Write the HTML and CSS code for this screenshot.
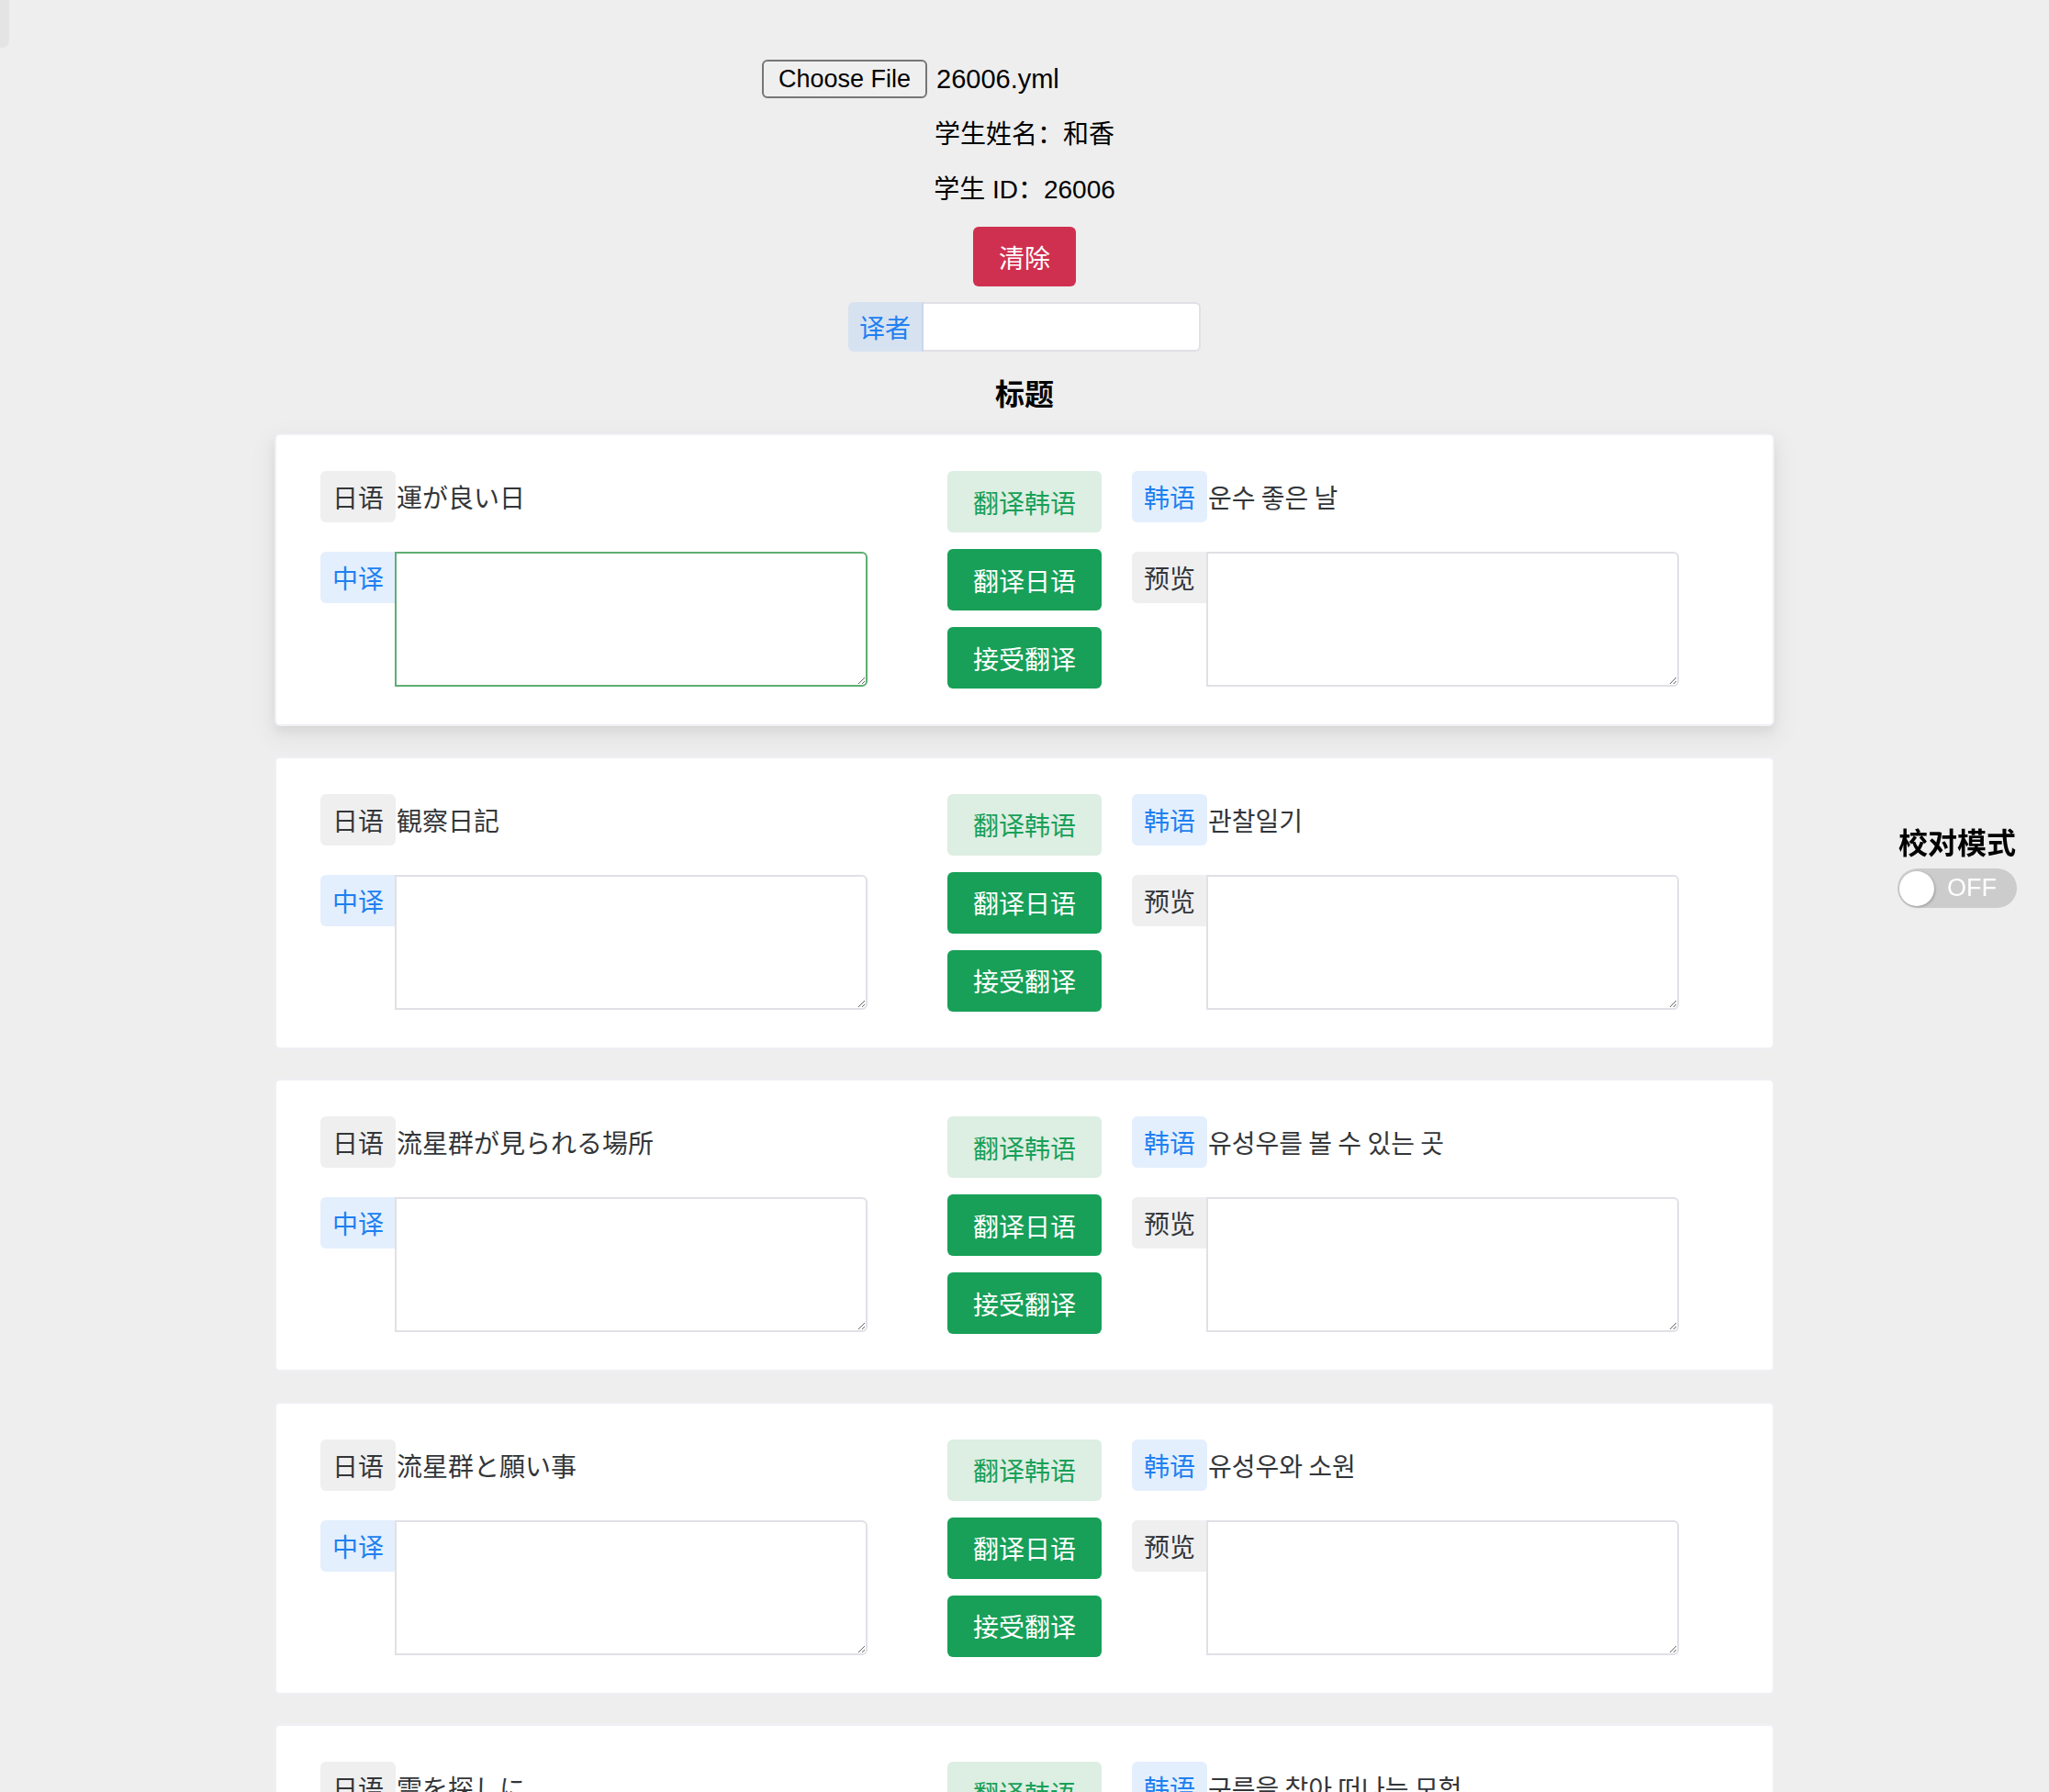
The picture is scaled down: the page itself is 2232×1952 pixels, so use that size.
FILE: index.html
```html
<!DOCTYPE html>
<html lang="zh">
<head>
<meta charset="utf-8">
<title>翻译校对</title>
<link rel="stylesheet" href="styles.css">
</head>
<body>
<div class="corner"></div>
<main class="page">
  <div class="file-row">
    <div class="file-input">
      <button class="file-btn">Choose File</button>
      <span class="file-name">26006.yml</span>
    </div>
  </div>
  <div class="info">学生姓名：和香</div>
  <div class="info">学生 ID：26006</div>
  <div class="clear-row"><button class="btn btn-error">清除</button></div>
  <div class="translator">
    <span class="tr-label">译者</span>
    <input class="tr-input" type="text">
  </div>
  <h2 class="title">标题</h2>

  <section class="cards">
    <article class="card card-hover">
      <div class="col">
        <div class="line"><span class="tag tag-gray">日语</span><span class="src ja">運が良い日</span></div>
        <div class="field"><span class="tag tag-blue attached">中译</span><textarea class="ta ta-focus"></textarea></div>
      </div>
      <div class="actions">
        <button class="btn btn-soft">翻译韩语</button>
        <button class="btn btn-primary">翻译日语</button>
        <button class="btn btn-primary">接受翻译</button>
      </div>
      <div class="col col-right">
        <div class="line"><span class="tag tag-blue">韩语</span><span class="src ko">운수 좋은 날</span></div>
        <div class="field"><span class="tag tag-gray attached">预览</span><textarea class="ta"></textarea></div>
      </div>
    </article>

    <article class="card">
      <div class="col">
        <div class="line"><span class="tag tag-gray">日语</span><span class="src ja">観察日記</span></div>
        <div class="field"><span class="tag tag-blue attached">中译</span><textarea class="ta"></textarea></div>
      </div>
      <div class="actions">
        <button class="btn btn-soft">翻译韩语</button>
        <button class="btn btn-primary">翻译日语</button>
        <button class="btn btn-primary">接受翻译</button>
      </div>
      <div class="col col-right">
        <div class="line"><span class="tag tag-blue">韩语</span><span class="src ko">관찰일기</span></div>
        <div class="field"><span class="tag tag-gray attached">预览</span><textarea class="ta"></textarea></div>
      </div>
    </article>

    <article class="card">
      <div class="col">
        <div class="line"><span class="tag tag-gray">日语</span><span class="src ja">流星群が見られる場所</span></div>
        <div class="field"><span class="tag tag-blue attached">中译</span><textarea class="ta"></textarea></div>
      </div>
      <div class="actions">
        <button class="btn btn-soft">翻译韩语</button>
        <button class="btn btn-primary">翻译日语</button>
        <button class="btn btn-primary">接受翻译</button>
      </div>
      <div class="col col-right">
        <div class="line"><span class="tag tag-blue">韩语</span><span class="src ko">유성우를 볼 수 있는 곳</span></div>
        <div class="field"><span class="tag tag-gray attached">预览</span><textarea class="ta"></textarea></div>
      </div>
    </article>

    <article class="card">
      <div class="col">
        <div class="line"><span class="tag tag-gray">日语</span><span class="src ja">流星群と願い事</span></div>
        <div class="field"><span class="tag tag-blue attached">中译</span><textarea class="ta"></textarea></div>
      </div>
      <div class="actions">
        <button class="btn btn-soft">翻译韩语</button>
        <button class="btn btn-primary">翻译日语</button>
        <button class="btn btn-primary">接受翻译</button>
      </div>
      <div class="col col-right">
        <div class="line"><span class="tag tag-blue">韩语</span><span class="src ko">유성우와 소원</span></div>
        <div class="field"><span class="tag tag-gray attached">预览</span><textarea class="ta"></textarea></div>
      </div>
    </article>

    <article class="card">
      <div class="col">
        <div class="line"><span class="tag tag-gray">日语</span><span class="src ja">雲を探しに</span></div>
        <div class="field"><span class="tag tag-blue attached">中译</span><textarea class="ta"></textarea></div>
      </div>
      <div class="actions">
        <button class="btn btn-soft">翻译韩语</button>
        <button class="btn btn-primary">翻译日语</button>
        <button class="btn btn-primary">接受翻译</button>
      </div>
      <div class="col col-right">
        <div class="line"><span class="tag tag-blue">韩语</span><span class="src ko">구름을 찾아 떠나는 모험</span></div>
        <div class="field"><span class="tag tag-gray attached">预览</span><textarea class="ta"></textarea></div>
      </div>
    </article>
  </section>
</main>

<aside class="proof-mode">
  <div class="proof-title">校对模式</div>
  <div class="switch">
    <span class="knob"></span>
    <span class="switch-text">OFF</span>
  </div>
</aside>
</body>
</html>
```

FILE: styles.css
```css
html, body {
  margin: 0;
  padding: 0;
}

body {
  background: #eeeeee;
  color: #000;
  font-family: "Liberation Sans", "Noto Sans CJK SC", sans-serif;
  font-size: 28px;
}

.corner {
  position: absolute;
  left: 0;
  top: 0;
  width: 10px;
  height: 52px;
  background: #e4e4e4;
  border-bottom-right-radius: 8px;
}

.page {
  padding-top: 65px;
  display: flex;
  flex-direction: column;
  align-items: center;
}

/* top controls */
.file-row {
  display: flex;
  justify-content: center;
}

.file-input {
  width: 572px;
  height: 42px;
  display: flex;
  align-items: center;
  gap: 10px;
}

.file-btn {
  height: 42px;
  width: 180px;
  box-sizing: border-box;
  border: 2px solid #767676;
  border-radius: 6px;
  background: #efefef;
  color: #000;
  font-family: "Liberation Sans", sans-serif;
  font-size: 27px;
  padding: 0;
}

.file-name {
  font-family: "Liberation Sans", sans-serif;
  font-size: 29px;
  line-height: 42px;
}

.info {
  margin-top: 20px;
  line-height: 40px;
  height: 40px;
  font-size: 28px;
  text-align: center;
}

.clear-row {
  margin-top: 20px;
}

.btn {
  border: none;
  border-radius: 6px;
  font-family: "Noto Sans CJK SC", sans-serif;
  font-size: 28px;
  padding: 0;
  cursor: pointer;
}

.btn-error {
  width: 112px;
  height: 65px;
  background: #d03050;
  color: #fff;
}

.translator {
  margin-top: 17px;
  width: 384px;
  height: 54px;
  display: flex;
}

.tr-label {
  width: 82px;
  box-sizing: border-box;
  background: #d7e2f1;
  color: #2080f0;
  font-family: "Noto Sans CJK SC", sans-serif;
  font-size: 28px;
  line-height: 54px;
  text-align: center;
  border-radius: 6px 0 0 6px;
  border-right: 2px solid #c9d7ea;
}

.tr-input {
  flex: 1;
  margin: 0;
  box-sizing: border-box;
  height: 54px;
  border: 2px solid #e0e0e6;
  border-left: none;
  border-radius: 0 6px 6px 0;
  background: #fff;
  outline: none;
}

.title {
  margin: 22px 0 0;
  font-size: 32px;
  line-height: 44px;
  font-weight: 700;
  font-family: "Noto Sans CJK SC", sans-serif;
}

/* cards */
.cards {
  margin-top: 23px;
  display: flex;
  flex-direction: column;
  gap: 32.5px;
}

.card {
  width: 1634px;
  box-sizing: border-box;
  background: #fff;
  border: 2px solid #efeff5;
  border-radius: 6px;
  padding: 39px 48px 39px 48px;
  display: flex;
  align-items: flex-start;
}

.card-hover {
  box-shadow: 0 2px 4px -4px rgba(0, 0, 0, 0.08),
              0 6px 12px 0 rgba(0, 0, 0, 0.06),
              0 10px 24px 8px rgba(0, 0, 0, 0.04);
}

.col {
  width: 596px;
  display: flex;
  flex-direction: column;
}

.col-right {
  margin-left: 33px;
}

.line {
  height: 56px;
  display: flex;
  align-items: center;
}

.field {
  margin-top: 32px;
  display: flex;
  align-items: flex-start;
}

.tag {
  height: 56px;
  width: 82px;
  box-sizing: border-box;
  padding: 0 13px;
  border-radius: 6px;
  font-family: "Noto Sans CJK SC", sans-serif;
  font-size: 28px;
  line-height: 56px;
  text-align: center;
  flex: none;
}

.tag.attached {
  border-radius: 6px 0 0 6px;
}

.tag-gray {
  background: #efeff0;
  color: #333639;
}

.tag-blue {
  background: #e4effd;
  color: #2080f0;
}

.src {
  margin-left: 1px;
  font-size: 28px;
  color: #333639;
  line-height: 56px;
}

.ja {
  font-family: "Noto Sans CJK JP", sans-serif;
}

.ko {
  font-family: "Noto Sans CJK KR", sans-serif;
}

.ta {
  display: block;
  margin: 0 0 0 -1px;
  width: 515px;
  height: 147px;
  box-sizing: border-box;
  border: 2px solid #e0e0e6;
  border-radius: 0 6px 6px 0;
  background: #fff;
  outline: none;
  font-size: 28px;
}

.ta-focus {
  border-color: #5fad73;
}

.actions {
  margin-left: 87px;
  width: 168px;
  display: flex;
  flex-direction: column;
  gap: 18px;
}

.actions .btn {
  width: 168px;
  height: 67px;
}

.btn-soft {
  background: #ddeee3;
  color: #18a058;
}

.btn-primary {
  background: #18a058;
  color: #fff;
}

/* proof mode toggle */
.proof-mode {
  position: fixed;
  right: 35px;
  top: 898px;
  width: 130px;
  display: flex;
  flex-direction: column;
  align-items: center;
}

.proof-title {
  font-family: "Noto Sans CJK SC", sans-serif;
  font-weight: 700;
  font-size: 32px;
  line-height: 36px;
  white-space: nowrap;
}

.switch {
  margin-top: 12px;
  position: relative;
  width: 130px;
  height: 43px;
  border-radius: 22px;
  background: #cccccc;
}

.knob {
  position: absolute;
  left: 2px;
  top: 3px;
  width: 38px;
  height: 38px;
  border-radius: 50%;
  background: #fff;
  box-shadow: 1px 1px 3px rgba(0, 0, 0, 0.25);
}

.switch-text {
  position: absolute;
  left: 54px;
  top: 0;
  line-height: 43px;
  font-family: "Liberation Sans", sans-serif;
  font-size: 27px;
  color: #fff;
}
```
